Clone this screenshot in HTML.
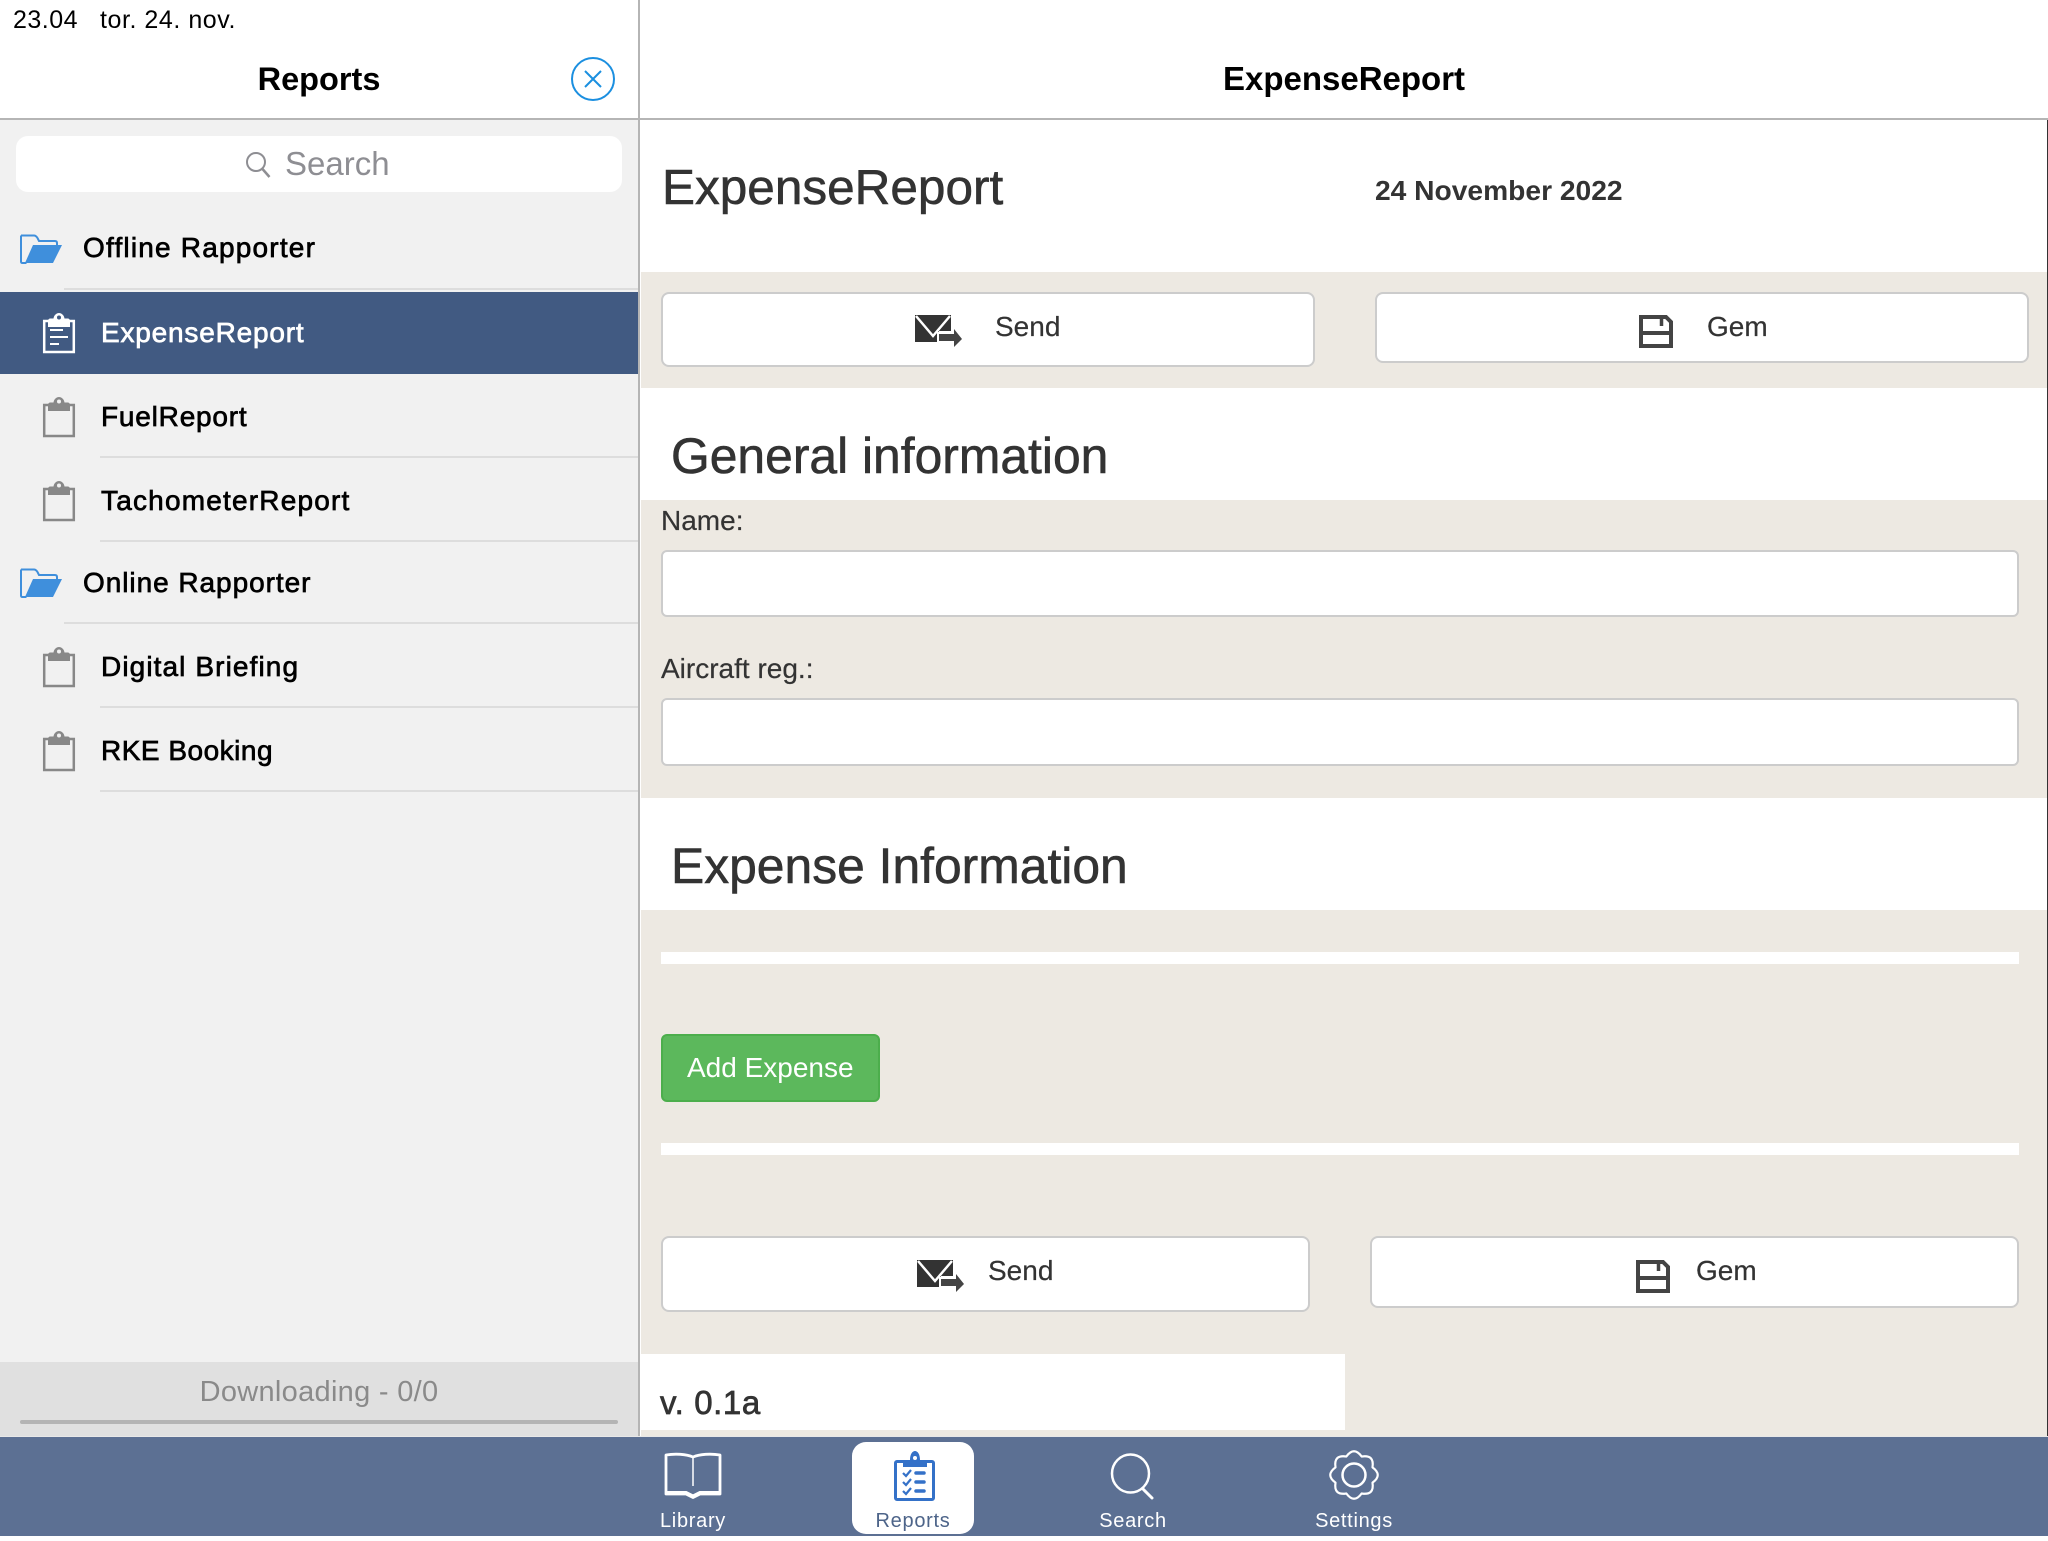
<!DOCTYPE html>
<html><head><meta charset="utf-8"><style>
html,body{margin:0;padding:0;width:2048px;height:1536px;overflow:hidden;background:#fff;font-family:"Liberation Sans",sans-serif}
.b{position:absolute}
.t{position:absolute;white-space:nowrap;line-height:40px;height:40px}
.c{transform:translateX(-50%)}
.side{font-size:28px;letter-spacing:1.2px;color:#000;-webkit-text-stroke:.7px currentColor}
.h{font-size:49.8px;color:#333;line-height:60px;height:60px;-webkit-text-stroke:.6px #333}
.btn{position:absolute;background:#fff;border:2px solid #ccc;border-radius:8px;box-sizing:border-box}
.inp{position:absolute;background:#fff;border:2px solid #ccc;border-radius:6px;box-sizing:border-box;left:661px;width:1358px}
.bt{font-size:28px;color:#333;-webkit-text-stroke:.2px #333}
.tab{font-size:20px;letter-spacing:.7px;color:#fff}
svg{position:absolute;left:0;top:0}
</style></head><body>
<!-- sidebar -->
<div class="b" style="left:0;top:119px;width:638px;height:1243px;background:#f1f1f1"></div>
<div class="b" style="left:0;top:1362px;width:638px;height:74px;background:#e0e0e0"></div>
<div class="b" style="left:0;top:118px;width:2048px;height:2px;background:#b5b5b5"></div>
<div class="b" style="left:638px;top:0;width:2px;height:1437px;background:#b5b5b5"></div>
<div class="b" style="left:16px;top:136px;width:606px;height:56px;background:#fff;border-radius:12px"></div>
<div class="b" style="left:64px;top:288px;width:574px;height:2px;background:#ddd"></div>
<div class="b" style="left:0;top:292px;width:638px;height:82px;background:#415a82"></div>
<div class="b" style="left:100px;top:456px;width:538px;height:2px;background:#ddd"></div>
<div class="b" style="left:100px;top:540px;width:538px;height:2px;background:#ddd"></div>
<div class="b" style="left:64px;top:622px;width:574px;height:2px;background:#ddd"></div>
<div class="b" style="left:100px;top:706px;width:538px;height:2px;background:#ddd"></div>
<div class="b" style="left:100px;top:790px;width:538px;height:2px;background:#ddd"></div>
<div class="b" style="left:20px;top:1420px;width:598px;height:4px;background:#b4b4b4;border-radius:2px"></div>
<div class="t" style="left:13px;top:0;font-size:25px;letter-spacing:.5px;color:#000">23.04</div>
<div class="t" style="left:100px;top:0;font-size:25px;letter-spacing:.55px;color:#000">tor. 24. nov.</div>
<div class="t c" style="left:319px;top:59px;font-size:32.5px;font-weight:bold;color:#000">Reports</div>
<div class="t" style="left:285px;top:144px;font-size:33px;color:#8e8e93">Search</div>
<div class="t side" style="left:83px;top:228px">Offline Rapporter</div>
<div class="t side" style="left:101px;top:313px;color:#fff;letter-spacing:.8px">ExpenseReport</div>
<div class="t side" style="left:101px;top:397px;letter-spacing:.8px">FuelReport</div>
<div class="t side" style="left:101px;top:481px">TachometerReport</div>
<div class="t side" style="left:83px;top:563px;letter-spacing:.95px">Online Rapporter</div>
<div class="t side" style="left:101px;top:647px;letter-spacing:1.1px">Digital Briefing</div>
<div class="t side" style="left:101px;top:731px;letter-spacing:.5px">RKE Booking</div>
<div class="t c" style="left:319px;top:1372px;font-size:29px;letter-spacing:.3px;color:#8a8a8a">Downloading - 0/0</div>
<!-- main -->
<div class="t c" style="left:1344px;top:59px;font-size:33px;font-weight:bold;color:#000">ExpenseReport</div>
<div class="t h" style="left:662px;top:158px;font-size:49.5px">ExpenseReport</div>
<div class="t" style="left:1375px;top:170px;font-size:28.2px;font-weight:bold;color:#333">24 November 2022</div>
<div class="b" style="left:641px;top:272px;width:1406px;height:116px;background:#ede9e2"></div>
<div class="btn" style="left:661px;top:292px;width:654px;height:75px"></div>
<div class="btn" style="left:1375px;top:292px;width:654px;height:71px"></div>
<div class="t bt" style="left:995px;top:307px">Send</div>
<div class="t bt" style="left:1707px;top:307px">Gem</div>
<div class="t h" style="left:671px;top:426px">General information</div>
<div class="b" style="left:641px;top:500px;width:1406px;height:298px;background:#ede9e2"></div>
<div class="t bt" style="left:661px;top:501px">Name:</div>
<div class="inp" style="top:550px;height:67px"></div>
<div class="t bt" style="left:661px;top:649px">Aircraft reg.:</div>
<div class="inp" style="top:698px;height:68px"></div>
<div class="t h" style="left:671px;top:836px">Expense Information</div>
<div class="b" style="left:641px;top:910px;width:1406px;height:527px;background:#ede9e2"></div>
<div class="b" style="left:661px;top:952px;width:1358px;height:12px;background:#fff"></div>
<div class="b" style="left:661px;top:1034px;width:219px;height:68px;background:#5cb85c;border:2px solid #4cae4c;border-radius:6px;box-sizing:border-box"></div>
<div class="t" style="left:687px;top:1048px;font-size:28px;color:#fff">Add Expense</div>
<div class="b" style="left:661px;top:1143px;width:1358px;height:12px;background:#fff"></div>
<div class="btn" style="left:661px;top:1236px;width:649px;height:76px"></div>
<div class="btn" style="left:1370px;top:1236px;width:649px;height:72px"></div>
<div class="t bt" style="left:988px;top:1251px">Send</div>
<div class="t bt" style="left:1696px;top:1251px">Gem</div>
<div class="b" style="left:640px;top:1354px;width:705px;height:76px;background:#fff"></div>
<div class="t" style="left:660px;top:1383px;font-size:33px;letter-spacing:.6px;color:#333;-webkit-text-stroke:.7px #333">v. 0.1a</div>
<div class="b" style="left:2047px;top:120px;width:1px;height:1317px;background:#333"></div>
<!-- tab bar -->
<div class="b" style="left:0;top:1436px;width:2048px;height:1px;background:#e8e8e8"></div>
<div class="b" style="left:0;top:1437px;width:2048px;height:99px;background:#5c7093"></div>
<div class="b" style="left:852px;top:1442px;width:122px;height:92px;background:#fff;border-radius:14px"></div>
<div class="t c tab" style="left:693px;top:1501px">Library</div>
<div class="t c tab" style="left:913px;top:1501px;color:#4d6489">Reports</div>
<div class="t c tab" style="left:1133px;top:1501px">Search</div>
<div class="t c tab" style="left:1354px;top:1501px">Settings</div>

<svg width="2048" height="1536" viewBox="0 0 2048 1536" fill="none">
<defs>
<g id="folder">
<path d="M21 569.500h13c1.500 0 2.500 1 3.500 2.500l1.500 3h16c1.500 0 2 1 2 2v4" stroke="#3f8fdc" stroke-width="2"/>
<path d="M21 569.500v26c0 .8.5 1.500 1.500 1.500h4" stroke="#3f8fdc" stroke-width="2"/>
<path d="M33 579h29l-9 18H25z" fill="#3f8fdc"/>
</g>
<g id="clip">
<rect x="44.200" y="655" width="29.600" height="31" stroke="#888" stroke-width="2.500"/>
<path d="M48 661v-6c0-1.500 1-2.500 2.500-2.500h3c.5-3.500 3-5.500 5.500-5.500s5 2 5.500 5.500h3c1.500 0 2.500 1 2.500 2.500v6z" fill="#888"/>
<circle cx="59" cy="651.500" r="2" fill="#f1f1f1"/>
</g>
<g id="send">
<path d="M0 0h36v16H24v11H0z" fill="#333"/>
<path d="M1 1L18 21L35 1" stroke="#fff" stroke-width="2.500"/>
<path d="M22 17h15v-6l13 13-11 10v-6H22z" fill="#fff"/>
<path d="M24 19h15v-5l8 10-8 8v-6H24z" fill="#444"/>
</g>
<g id="save">
<path d="M2 2h25l5 5v24H2z" stroke="#444" stroke-width="4"/>
<path d="M2 18h30" stroke="#444" stroke-width="4"/>
<path d="M22.500 2v9" stroke="#444" stroke-width="3.500"/>
</g>
</defs>
<!-- close -->
<circle cx="593" cy="79" r="21" stroke="#1b8fe0" stroke-width="2"/>
<path d="M585 71l16 16M601 71l-16 16" stroke="#1b8fe0" stroke-width="2"/>
<!-- search -->
<circle cx="256" cy="162" r="9" stroke="#8e8e93" stroke-width="2"/>
<path d="M262.500 169l7 8" stroke="#8e8e93" stroke-width="2.500"/>
<!-- list icons -->
<use href="#folder" y="-334"/>
<use href="#folder" y="0"/>
<g transform="translate(0,-334)">
<rect x="44.200" y="655" width="29.600" height="31" stroke="#fff" stroke-width="2.500"/>
<path d="M48 661v-6c0-1.500 1-2.500 2.500-2.500h3c.5-3.500 3-5.500 5.500-5.500s5 2 5.500 5.500h3c1.500 0 2.500 1 2.500 2.500v6z" fill="#fff"/>
<circle cx="59" cy="651.500" r="2" fill="#415a82"/>
<path d="M50 664h13M50 671h18M50 678h9" stroke="#fff" stroke-width="2"/>
</g>
<use href="#clip" y="-250"/>
<use href="#clip" y="-166"/>
<use href="#clip" y="0"/>
<use href="#clip" y="84"/>
<!-- buttons icons -->
<use href="#send" transform="translate(915,315)"/>
<use href="#save" transform="translate(1639,315)"/>
<use href="#send" transform="translate(917,1260)"/>
<use href="#save" transform="translate(1636,1260)"/>
<!-- library -->
<path d="M666 1455c9-1.500 20-1 27 2 7-3 18-3.500 27-2v39h-20l-7 3.500-7-3.500h-20z" stroke="#fff" stroke-width="2.800" stroke-linejoin="round"/>
<path d="M693 1457v29" stroke="#fff" stroke-width="1.500"/>
<path d="M665 1493h21l7 3.500 7-3.500h21" stroke="#fff" stroke-width="4"/>
<!-- reports -->
<rect x="895.500" y="1461.500" width="38" height="38" rx="1.500" stroke="#3471c8" stroke-width="3"/>
<path d="M903 1467v-5c0-1.500 1-2 2-2h5c0-6 2.500-9 5-9s5 3 5 9h5c1 0 2 .5 2 2v5z" fill="#3471c8"/>
<circle cx="915" cy="1458" r="2" fill="#fff"/>
<path d="M903 1473l3 3 5-6M903 1482l3 3 5-6M903 1491l3 3 5-6" stroke="#3471c8" stroke-width="2.200"/>
<path d="M916 1473h8M916 1482h8M916 1491h8" stroke="#3471c8" stroke-width="3.500" stroke-linecap="round"/>
<!-- search tab -->
<ellipse cx="1130.500" cy="1473.500" rx="18.500" ry="19" stroke="#fff" stroke-width="2.500"/>
<path d="M1143 1489l9 9" stroke="#fff" stroke-width="3" stroke-linecap="round"/>
<!-- settings -->
<circle cx="1354" cy="1475" r="11.500" stroke="#fff" stroke-width="2.500"/>
<path transform="translate(1354,1475)" d="M18.500-7.650Q29 0 18.500 7.650Q20.500 20.500 7.650 18.500Q0 29-7.650 18.500Q-20.500 20.500-18.500 7.650Q-29 0-18.500-7.650Q-20.500-20.500-7.650-18.500Q0-29 7.650-18.500Q20.500-20.500 18.500-7.650z" stroke="#fff" stroke-width="2.200" stroke-linejoin="round"/>
</svg>
</body></html>
